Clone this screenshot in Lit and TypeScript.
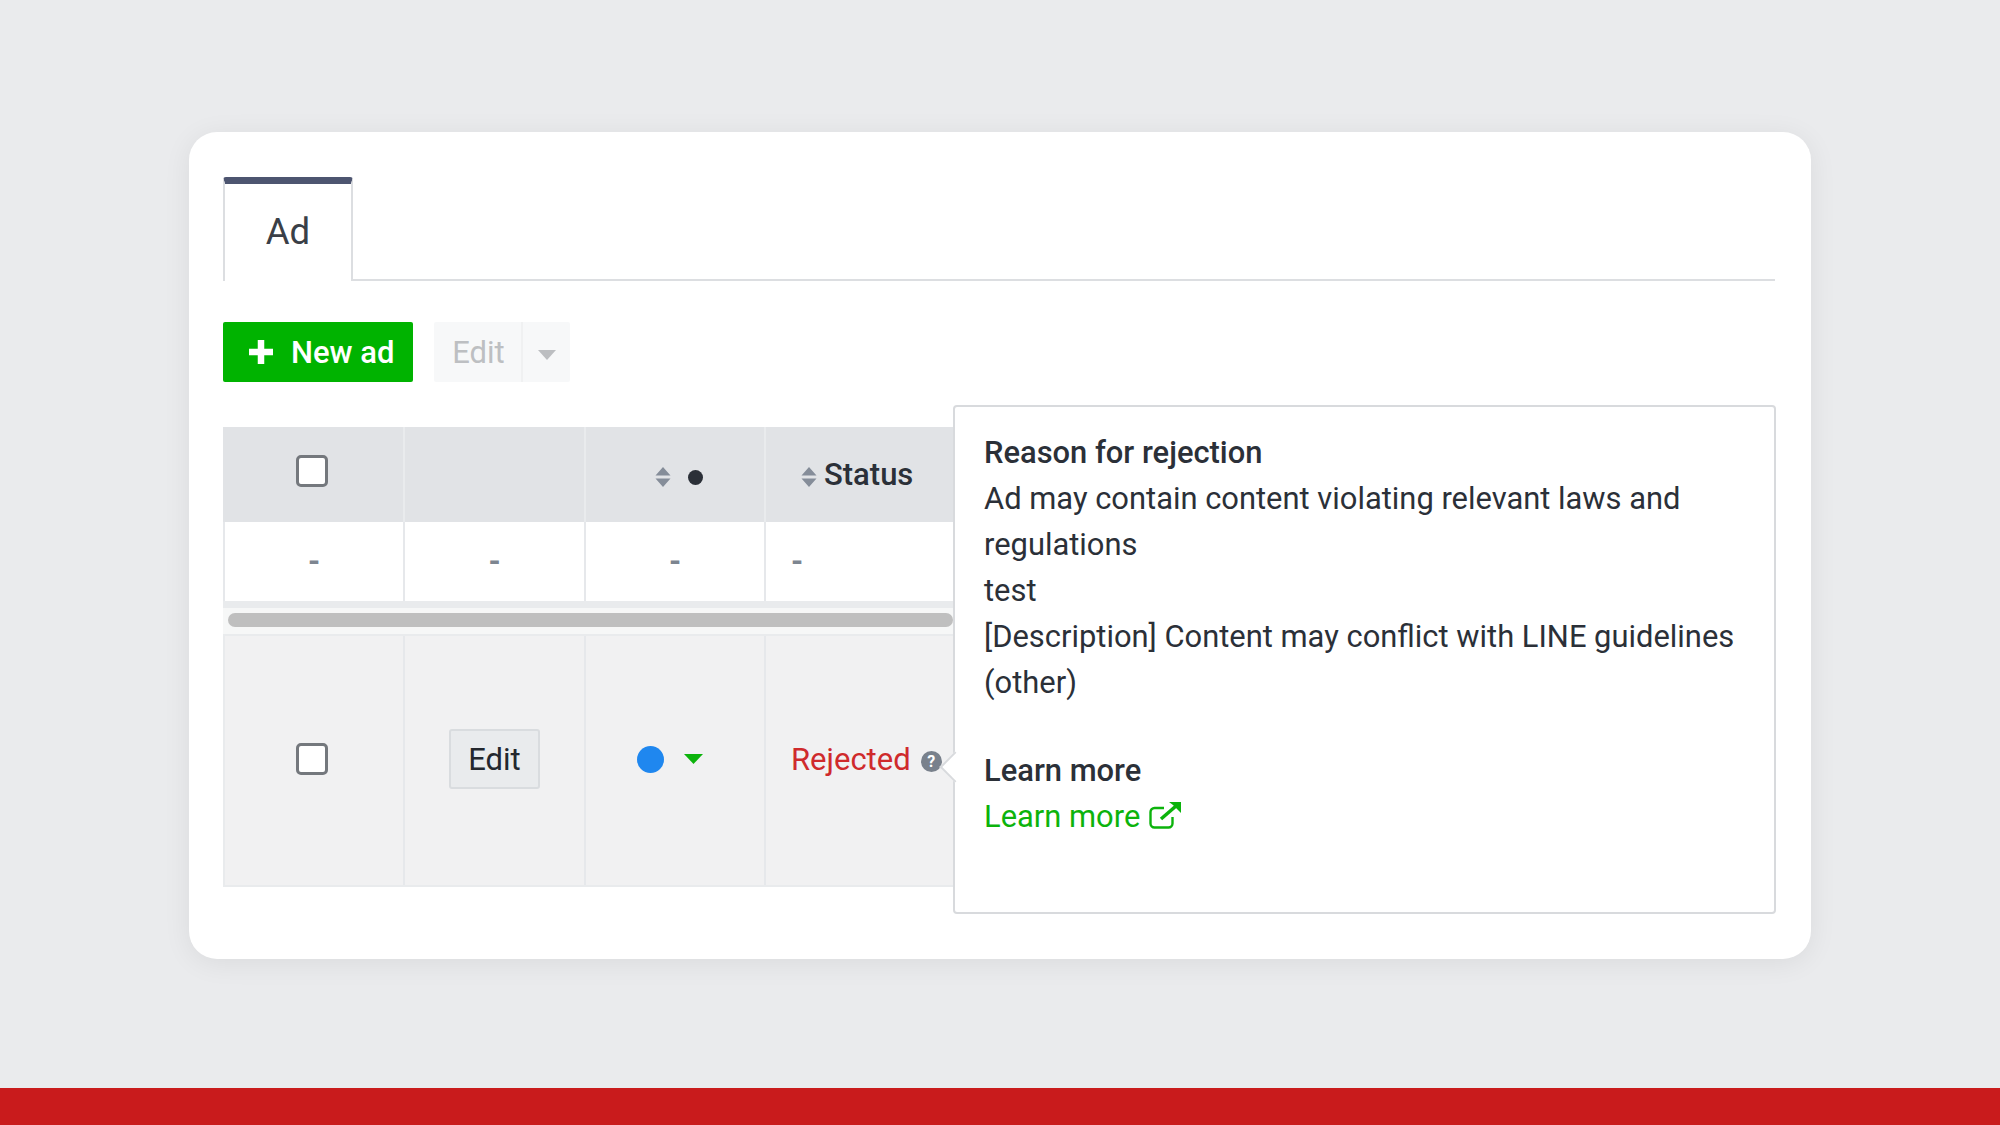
import { LitElement, html, css, svg } from "lit";
import { customElement } from "lit/decorators.js";

const sorter = svg`<svg class="sort" width="16" height="20" viewBox="0 0 16 20"><path d="M8 0L15.500 8.500H.5zM8 20L.5 11.500H15.500z" fill="#858d99"/></svg>`;

@customElement("app-root")
export class AppRoot extends LitElement {
  static styles = css`
    :host { display: block; }
    * { box-sizing: border-box; }
    .page {
      height: 1125px; background: #eaebed; display: flex; flex-direction: column;
      font-family: Roboto, "Liberation Sans", sans-serif; color: #2b3038;
      font-size: 30.900px;
    }
    .main { flex: 1; padding: 132px 189px 0; }
    .footer { height: 37px; background: #c91b1c; }
    .card {
      height: 827px; background: #fff; border-radius: 28px; padding: 45px 36px 0 34px;
      box-shadow: 0 4px 28px rgba(0,0,0,.07);
    }
    .tabs { height: 104px; border-bottom: 2px solid #dcdee1; display: flex; }
    .tab {
      width: 130px; height: 104px; border: 2px solid #dcdee1; border-top: 7px solid #4d5570;
      border-bottom: 0; border-radius: 3px 3px 0 0; background: #fff;
      display: flex; align-items: center; justify-content: center; font-size: 36.500px; color: #3a3f47;
      padding-bottom: 3px;
    }
    .toolbar { display: flex; gap: 21px; margin-top: 41px; }
    .new {
      width: 190px; height: 60px; background: #00b300; color: #fff; border-radius: 2px;
      display: flex; align-items: center; gap: 17px; padding-left: 25px; font-weight: 500; font-size: 31px;
    }
    .split { display: flex; height: 60px; width: 136px; background: #f7f8f9; border-radius: 2px; color: #bdbfc2; font-size: 31px; }
    .split .lab { width: 89px; display: flex; align-items: center; justify-content: center; border-right: 2px solid #f0f1f2; padding-left: 2px; }
    .split .car { flex: 1; display: flex; align-items: center; justify-content: center; padding-top: 5px; }
    .area { position: relative; margin-top: 45px; height: 459px; }
    .row { display: grid; grid-template-columns: 182px 181px 180px 187px; }
    .cell { display: flex; align-items: center; justify-content: center; border-right: 2px solid #e6e8eb; }
    .cell:last-child { border-right: 0; }
    .head { background: #e1e3e6; height: 95px; }
    .head .cell { border-right-color: #e9ebed; }
    .data { height: 79px; background: #fff; box-shadow: inset 2px 0 0 #e6e8eb; color: #7d8590; font-size: 31px; font-weight: 700; }
    .data .cell:first-child { padding-left: 2px; }
    .data .cell:last-child { justify-content: flex-start; padding-left: 25px; }
    .strip { height: 33px; background: #f6f7f7; border-top: 7px solid #e9ebed; padding: 5px 5px 0; }
    .thumb { height: 14px; width: 725px; background: #bfbfbf; border-radius: 7px; }
    .body { height: 253px; background: #f1f1f2; border-top: 2px solid #e9ebed; border-bottom: 2px solid #e9ebed; box-shadow: inset 2px 0 0 #e9ebed; }
    .body .cell { padding-bottom: 3px; }
    .check { width: 32px; height: 32px; border: 3px solid #74787d; border-radius: 5px; background: #fff; }
    .hc { margin-top: -7px; margin-left: -2px; }
    .bc { margin-left: -2px; margin-top: -1px; }
    .sortcell { gap: 17px; padding-top: 5px; padding-left: 8px; }
    .sortcell.status { gap: 7px; padding-top: 0; justify-content: flex-start; padding-left: 35px; font-weight: 500; font-size: 31px; }
    .status .sort { margin-top: 5px; }
    .dot { width: 15px; height: 15px; background: #2b3038; border-radius: 50%; }
    .editbtn {
      width: 91px; height: 60px; background: #e9ebed; border: 2px solid #d9dcdf; border-radius: 3px;
      display: flex; align-items: center; justify-content: center; color: #23272e; font-size: 31px;
    }
    .stat { gap: 20px; padding-right: 10px; }
    .blue { width: 27px; height: 27px; border-radius: 50%; background: #1f87ef; }
    .rej { color: #cf2a2c; font-size: 31px; white-space: nowrap; }
    .rejcell { justify-content: flex-start; padding-left: 25px; gap: 10px; }
    .help { width: 21px; height: 21px; border-radius: 50%; background: #79818c; color: #fff; font-size: 16px; font-weight: 700; display: flex; align-items: center; justify-content: center; margin-top: 4px; flex: none; }
    .pop {
      position: absolute; left: 730px; top: -22px; width: 823px; height: 509px; background: #fff;
      border: 2px solid #d8dadd; border-radius: 4px; padding: 23px 29px 0; line-height: 46px; font-size: 30.900px;
    }
    .pop::before {
      content: ""; position: absolute; left: -11px; top: 349px; width: 20px; height: 20px; background: #fff;
      border-left: 2px solid #d8dadd; border-bottom: 2px solid #d8dadd; transform: rotate(45deg);
    }
    .pop b { font-weight: 500; display: block; }
    .gap { height: 42px; }
    .link { color: #0cb30c; display: flex; align-items: center; gap: 9px; }
    .link svg { margin-top: -4px; }
  `;

  render() {
    return html`<div class="page">
      <div class="main"><div class="card">
        <div class="tabs"><div class="tab">Ad</div></div>
        <div class="toolbar">
          <div class="new">
            <svg width="26" height="26" viewBox="0 0 26 26"><path d="M13 1v24M1 13h24" stroke="#fff" stroke-width="6.500"/></svg>
            <span>New ad</span>
          </div>
          <div class="split"><div class="lab">Edit</div><div class="car">
            <svg width="18" height="10" viewBox="0 0 18 10"><path d="M0 0h18L9 10z" fill="#bcbec1"/></svg>
          </div></div>
        </div>
        <div class="area">
          <div class="row head">
            <div class="cell"><div class="check hc"></div></div>
            <div class="cell"></div>
            <div class="cell sortcell">${sorter}<div class="dot"></div></div>
            <div class="cell sortcell status">${sorter}<span>Status</span></div>
          </div>
          <div class="row data">
            <div class="cell">-</div><div class="cell">-</div><div class="cell">-</div><div class="cell">-</div>
          </div>
          <div class="strip"><div class="thumb"></div></div>
          <div class="row body">
            <div class="cell"><div class="check bc"></div></div>
            <div class="cell"><div class="editbtn">Edit</div></div>
            <div class="cell stat"><div class="blue"></div>
              <svg width="19" height="10" viewBox="0 0 19 10"><path d="M0 0h19L9.500 10z" fill="#0cb30c"/></svg>
            </div>
            <div class="cell rejcell"><span class="rej">Rejected</span><div class="help">?</div></div>
          </div>
          <div class="pop">
            <b>Reason for rejection</b>
            <div>Ad may contain content violating relevant laws and regulations</div>
            <div>test</div>
            <div>[Description] Content may conflict with LINE guidelines (other)</div>
            <div class="gap"></div>
            <b>Learn more</b>
            <div class="link"><span>Learn more</span>
              <svg width="32" height="27" viewBox="0 0 32 27" fill="none" stroke="#0cb30c" stroke-width="2.400">
                <path d="M23.500 15v6.500a4 4 0 0 1-4 4H5.500a4 4 0 0 1-4-4V10a4 4 0 0 1 4-4H15"/>
                <path d="M12 17L27 4" stroke-width="3.500"/>
                <path d="M20 0H32V11L28 7 24 3z" stroke="none" fill="#0cb30c"/>
              </svg>
            </div>
          </div>
        </div>
      </div></div>
      <div class="footer"></div>
    </div>`;
  }
}
